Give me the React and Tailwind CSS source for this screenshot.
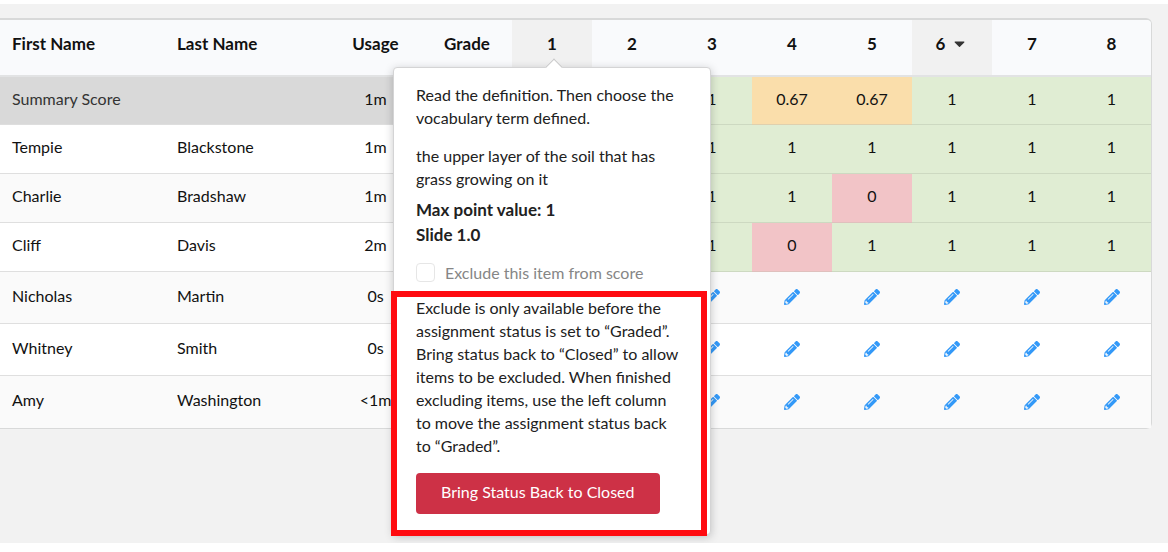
import { useState } from "react";
import { FaPencilAlt, FaCaretDown } from "react-icons/fa";

const items = [1, 2, 3, 4, 5, 6, 7, 8];

const students = [
    { first: "Tempie", last: "Blackstone", usage: "1m", scores: { 3: 1, 4: 1, 5: 1, 6: 1, 7: 1, 8: 1 } },
    { first: "Charlie", last: "Bradshaw", usage: "1m", scores: { 3: 1, 4: 1, 5: 0, 6: 1, 7: 1, 8: 1 } },
    { first: "Cliff", last: "Davis", usage: "2m", scores: { 3: 1, 4: 0, 5: 1, 6: 1, 7: 1, 8: 1 } },
    { first: "Nicholas", last: "Martin", usage: "0s" },
    { first: "Whitney", last: "Smith", usage: "0s" },
    { first: "Amy", last: "Washington", usage: "<1m" },
];

const summary = { 3: 1, 4: 0.67, 5: 0.67, 6: 1, 7: 1, 8: 1 };

const scoreColor = (score) => {
    if (score === undefined) return "border-[#dfdfdf]";
    if (score === 1) return "bg-[#e0edd3] border-[#cdd9c1]";
    if (score === 0) return "bg-[#f2c4c7] border-[#dfc0bd]";
    return "bg-[#fadeab] border-[#dfd0ae]";
};

const ItemPopover = () => {
    const [excluded, setExcluded] = useState(false);

    return (
        <div className="absolute top-[47px] left-1/2 z-10 w-[318px] -translate-x-1/2 rounded border border-[#d4d4d5] bg-white px-[22px] pt-[15px] pb-5 text-left text-base font-normal leading-[23px] text-[#212121] shadow-[0_2px_8px_rgba(34,36,38,0.25)]">
            <span className="absolute -top-[7px] left-[154px] size-3 rotate-45 border-t border-l border-[#c8c8c9] bg-white"></span>
            <p>Read the definition. Then choose the vocabulary term defined.</p>
            <p className="mt-[15px]">the upper layer of the soil that has grass growing on it</p>
            <p className="mt-2 text-[17px] leading-[23px] font-bold">Max point value: 1</p>
            <p className="mt-0.5 text-[17px] leading-[23px] font-bold">Slide 1.0</p>
            <label className="mt-[15px] flex items-center gap-2.5 text-[#868686]">
                <input
                    type="checkbox"
                    disabled
                    checked={excluded}
                    onChange={(e) => setExcluded(e.target.checked)}
                    className="size-[19px] appearance-none rounded border border-[#e6e6e6] bg-white"
                />
                Exclude this item from score
            </label>
            <p className="mt-3">
                Exclude is only available before the assignment status is set to “Graded”. Bring status back to “Closed” to allow items to be excluded. When finished excluding items, use the left column<br />
                to move the assignment status back<br />
                to “Graded”.
            </p>
            <button type="button" className="mt-4 h-[41px] rounded bg-[#cd3146] px-[25px] pb-1 text-white">
                Bring Status Back to Closed
            </button>
            <div className="pointer-events-none absolute top-[223px] right-[3px] -bottom-0.5 -left-[3px] border-6 border-[#ff0b10]"></div>
        </div>
    );
};

const App = () => {
    const [active, setActive] = useState(1);

    return (
        <div className="bg-white pt-1 font-['Lato','Open_Sans',sans-serif] text-base text-[#111]">
            <main className="bg-[#f2f2f2] pt-3.5 pr-4 pb-[114px]">
                <div className="rounded-r-md border-t-2 border-r border-b border-[#d8d9d9] bg-[#fafafa]">
                    <table className="w-full table-fixed border-separate border-spacing-0 text-center">
                        <colgroup>
                            <col className="w-[165px]" />
                            <col className="w-[164px]" />
                            <col className="w-[93px]" />
                            <col className="w-[90px]" />
                            {items.map((n) => <col key={n} className={n === 8 ? "w-[79px]" : "w-20"} />)}
                        </colgroup>
                        <thead>
                            <tr className="h-[57px] text-[17px] [&>th]:border-b-2 [&>th]:border-[#e2e3e4] [&>th]:pb-2">
                                <th className="bg-[#f9fafc] pl-3 text-left">First Name</th>
                                <th className="bg-[#f9fafc] pl-3 text-left">Last Name</th>
                                <th className="bg-[#f9fafc]">Usage</th>
                                <th className="bg-[#f9fafc]">Grade</th>
                                {items.map((n) => (
                                    <th key={n} className={`relative last:rounded-tr ${n === 1 || n === 6 ? "bg-[#f1f1f1]" : "bg-[#f9fafc]"}`}>
                                        <button type="button" onClick={() => setActive(active === n ? null : n)} className="inline-flex items-center gap-1.5">
                                            {n}
                                            {n === 6 && <FaCaretDown className="text-[#333]" />}
                                        </button>
                                        {active === n && <ItemPopover />}
                                    </th>
                                ))}
                            </tr>
                        </thead>
                        <tbody>
                            <tr className="h-12 bg-[#d9d9d9] [&>td]:border-b [&>td]:pb-1">
                                <td colSpan={2} className="border-[#dedede] pl-3 text-left text-[#333]">Summary Score</td>
                                <td className="border-[#dedede]">1m</td>
                                <td className="border-[#dedede]"></td>
                                {items.map((n) => <td key={n} className={scoreColor(summary[n])}>{summary[n]}</td>)}
                            </tr>
                            {students.map((s) => (
                                <tr
                                    key={s.first}
                                    className={`${s.scores ? "h-[49px]" : "h-[52px]"} odd:bg-[#fafafa] even:bg-white [&>td]:border-b [&>td]:pb-1 last:[&>td]:border-b-0 last:bg-transparent`}
                                >
                                    <td className="border-[#dfdfdf] pl-3 text-left">{s.first}</td>
                                    <td className="border-[#dfdfdf] pl-3 text-left">{s.last}</td>
                                    <td className="border-[#dfdfdf]">{s.usage}</td>
                                    <td className="border-[#dfdfdf]"></td>
                                    {items.map((n) => s.scores ? (
                                        <td key={n} className={scoreColor(s.scores[n])}>{s.scores[n]}</td>
                                    ) : (
                                        <td key={n} className="border-[#dfdfdf]">
                                            <button type="button" aria-label={`Score item ${n}`} className="align-middle text-base text-[#3399f8]">
                                                <FaPencilAlt />
                                            </button>
                                        </td>
                                    ))}
                                </tr>
                            ))}
                        </tbody>
                    </table>
                </div>
            </main>
        </div>
    );
};

export default App;
